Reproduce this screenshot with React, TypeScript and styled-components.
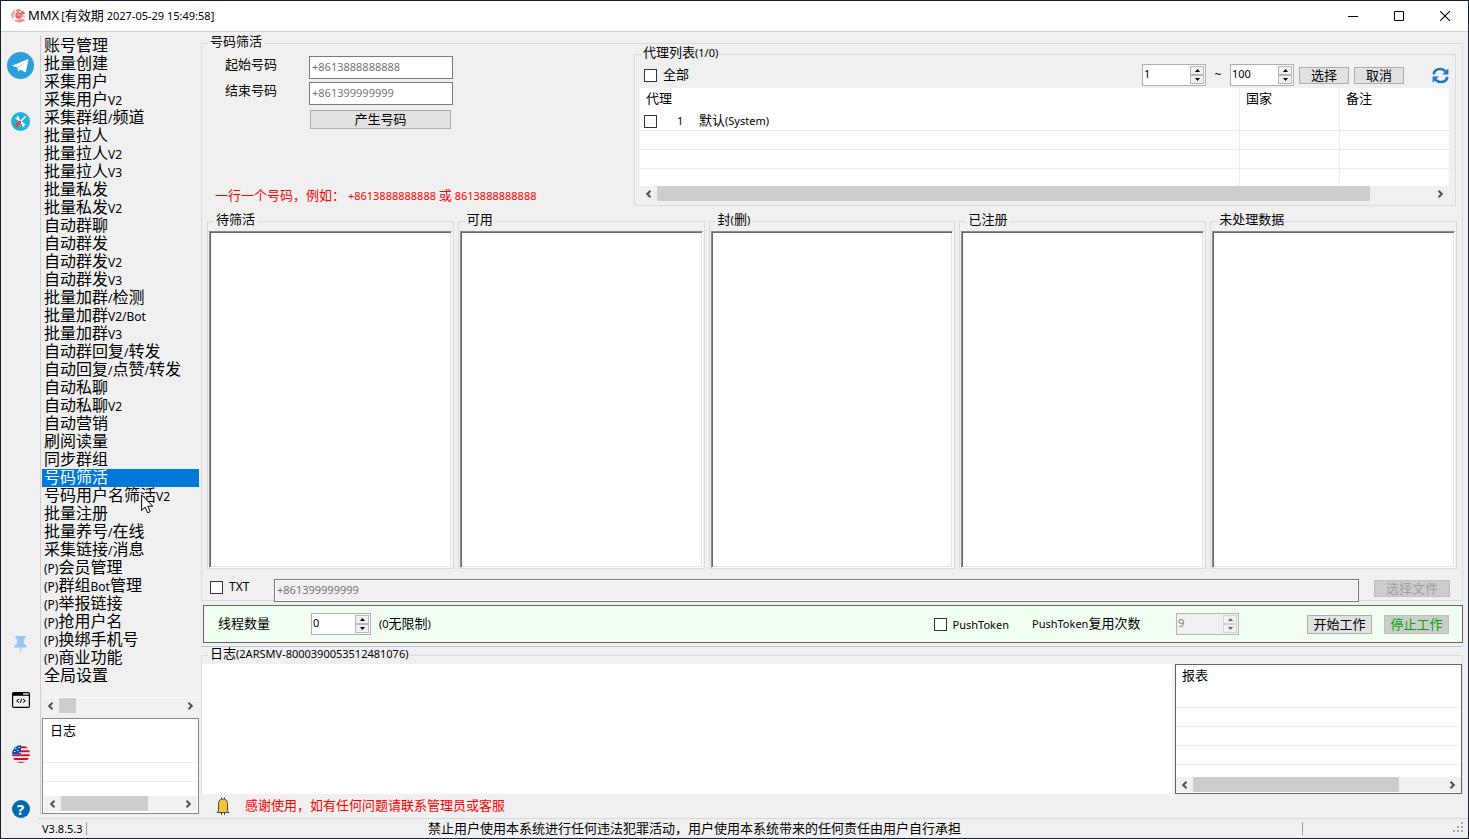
import React from "react";
import styled, { createGlobalStyle, css } from "styled-components";

const latinFont = `"Noto Sans", "Noto Sans CJK SC", sans-serif`;

const Global = createGlobalStyle`
  html, body { margin: 0; padding: 0; }
  *, *::before, *::after { box-sizing: border-box; }
  body {
    font-family: "Liberation Sans", "Noto Sans CJK SC", sans-serif;
    font-size: 13px;
    line-height: 18px;
    color: #000;
    background: #f0f0f0;
  }
  button, input, textarea { font: inherit; color: inherit; margin: 0; border-radius: 0; }
  button { padding: 0; }
`;

/* ---------- text ---------- */

const Latin = styled.span<{ $size: number }>`
  font-family: ${latinFont};
  font-size: ${(p) => p.$size}px;
  line-height: 1;
`;

/* Latin runs are set smaller than the Chinese characters around them. */
function Mixed({ text, size = 11 }: { text: string; size?: number }) {
  const parts = text.split(/([\x20-\x7e]+)/).filter(Boolean);
  return (
    <>
      {parts.map((part, i) =>
        /^[\x20-\x7e]+$/.test(part) ? (
          <Latin key={i} $size={size}>
            {part}
          </Latin>
        ) : (
          part
        )
      )}
    </>
  );
}

/* ---------- window ---------- */

const Window = styled.div`
  min-height: 100vh;
  display: flex;
  flex-direction: column;
  border: 1px solid #16202e;
  background: #f0f0f0;
  white-space: nowrap;
`;

const TitleBar = styled.header`
  height: 31px;
  display: flex;
  align-items: center;
  padding-left: 9px;
  background: #fff;
  border-bottom: 1px solid #d0d0d0;
`;

const Title = styled.h1`
  margin: 0 auto 0 2px;
  display: flex;
  align-items: baseline;
  gap: 2px;
  font-size: 13px;
  font-weight: 400;
  line-height: 18px;
`;

const WindowButton = styled.button`
  width: 46px;
  height: 30px;
  display: grid;
  place-items: center;
  border: 0;
  background: transparent;
`;

const Body = styled.div`
  flex: 1;
  display: flex;
`;

/* ---------- icon rail ---------- */

const Rail = styled.nav`
  width: 39px;
  display: flex;
  flex-direction: column;
  justify-content: space-between;
  align-items: center;
  padding-top: 20px;
`;

const RailGroup = styled.div<{ $gap: number }>`
  display: flex;
  flex-direction: column;
  align-items: center;
  gap: ${(p) => p.$gap}px;
`;

const RailButton = styled.button`
  display: grid;
  place-items: center;
  border: 0;
  background: transparent;
`;

const HelpMark = styled.span`
  width: 18px;
  height: 18px;
  border-radius: 50%;
  background: #0268b3;
  color: #fff;
  font-family: ${latinFont};
  font-size: 15px;
  font-weight: 700;
  line-height: 18px;
  text-align: center;
`;

/* ---------- sidebar ---------- */

const Sidebar = styled.aside`
  width: 160px;
  margin: 3px 0;
  padding: 2px 1px 1px 1px;
  border-left: 1px solid #cfcfcf;
  display: flex;
  flex-direction: column;
`;

const Menu = styled.ul`
  list-style: none;
  margin: 0;
  padding: 0;
  flex: 1;
`;

const MenuItem = styled.li`
  position: relative;
  height: 18px;
`;

const MenuButton = styled.button<{ $active: boolean }>`
  display: block;
  width: 100%;
  height: 18px;
  padding: 0 2px;
  border: 0;
  text-align: left;
  font-size: 16px;
  line-height: 18px;
  background: ${(p) => (p.$active ? "#0078d7" : "transparent")};
  color: ${(p) => (p.$active ? "#fff" : "#000")};
`;

const Pointer = styled.svg`
  position: absolute;
  left: 99px;
  top: 7px;
  z-index: 2;
`;

const SidebarScroll = styled.div`
  border-top: 1px solid #fff;
  margin-bottom: 5px;
`;

const ListBox = styled.section<{ $edge: string }>`
  display: flex;
  flex-direction: column;
  border: 1px solid ${(p) => p.$edge};
  background: #fff;
`;

const LogBox = styled(ListBox)`
  height: 96px;
  padding: 1px 1px 2px;
`;

const ListHead = styled.h2<{ $indent: number }>`
  height: 24px;
  margin: 0;
  padding-left: ${(p) => p.$indent}px;
  font-size: 13px;
  font-weight: 400;
  line-height: 22px;
`;

const ListLines = styled.div`
  flex: 1;
  overflow: hidden;
`;

const ListLine = styled.div`
  height: 19px;
  border-bottom: 1px solid #ececec;
`;

/* ---------- scroll bar ---------- */

const ScrollTrack = styled.div`
  height: 15px;
  display: flex;
  background: #f0f0f0;
`;

const ScrollArrow = styled.button`
  width: 17px;
  height: 15px;
  display: grid;
  place-items: center;
  border: 0;
  background: transparent;
`;

const ScrollLane = styled.div`
  flex: 1;
`;

const ScrollThumb = styled.div<{ $share: number }>`
  width: ${(p) => p.$share}%;
  height: 15px;
  background: #cdcdcd;
`;

function ScrollBar({ share }: { share: number }) {
  return (
    <ScrollTrack>
      <ScrollArrow type="button" aria-label="向左滚动">
        <svg width="7" height="8" viewBox="0 0 7 8">
          <path d="M5.5 0.8 2.2 4 5.5 7.2" fill="none" stroke="#505050" strokeWidth="2" />
        </svg>
      </ScrollArrow>
      <ScrollLane>
        <ScrollThumb $share={share} />
      </ScrollLane>
      <ScrollArrow type="button" aria-label="向右滚动">
        <svg width="7" height="8" viewBox="0 0 7 8">
          <path d="M1.5 0.8 4.8 4 1.5 7.2" fill="none" stroke="#505050" strokeWidth="2" />
        </svg>
      </ScrollArrow>
    </ScrollTrack>
  );
}

/* ---------- group boxes ---------- */

const Group = styled.fieldset`
  position: relative;
  min-width: 0;
  margin: 0;
  padding: 0;
  border: 1px solid #dcdcdc;
`;

const Legend = styled.legend`
  position: absolute;
  top: -9px;
  left: 6px;
  padding: 0 2px;
  background: #f0f0f0;
  line-height: 14px;
`;

/* ---------- controls ---------- */

const Button = styled.button<{ $width: number; $tall?: boolean; $tone?: "off" | "stop" }>`
  width: ${(p) => p.$width}px;
  height: ${(p) => (p.$tall ? 19 : 17)}px;
  display: flex;
  align-items: center;
  justify-content: center;
  border: 1px solid #adadad;
  background: #e1e1e1;
  line-height: 15px;
  ${(p) =>
    p.$tone &&
    css`
      border-color: #bfbfbf;
      background: #cccccc;
      color: ${p.$tone === "stop" ? "#00a800" : "#a0a0a0"};
    `}
`;

const TextInput = styled.input<{ $grow?: boolean }>`
  ${(p) => (p.$grow ? "flex: 1; min-width: 0;" : "width: 144px;")}
  height: 23px;
  padding: 0 2px 2px;
  border: 1px solid #7a7a7a;
  outline: none;
  background: #fff;
  font-family: ${latinFont};
  font-size: 11px;
  &::placeholder { color: #757575; opacity: 1; }
  &:disabled { background: #f0f0f0; box-shadow: inset 0 0 0 1px #fff; }
`;

const Check = styled.input.attrs({ type: "checkbox" })`
  appearance: none;
  flex: none;
  display: block;
  width: 13px;
  height: 13px;
  border: 1px solid #333;
  background: #fff;
`;

const CheckLabel = styled.label`
  display: flex;
  align-items: center;
  gap: 6px;
`;

const SpinFrame = styled.div<{ $width: number; $off?: boolean }>`
  width: ${(p) => p.$width}px;
  height: 22px;
  display: flex;
  border: 1px solid ${(p) => (p.$off ? "#b4b4b4" : "#abadb3")};
  background: ${(p) => (p.$off ? "#f0f0f0" : "#fff")};
`;

const SpinInput = styled.input`
  flex: 1;
  min-width: 0;
  height: 18px;
  padding: 0 1px;
  border: 0;
  outline: none;
  background: transparent;
  font-family: ${latinFont};
  font-size: 11px;
  appearance: textfield;
  &::-webkit-inner-spin-button { display: none; }
  &:disabled { color: #808080; }
`;

const SpinButtons = styled.div`
  display: flex;
  flex-direction: column;
  padding: 1px;
`;

const SpinButton = styled.button`
  width: 14px;
  height: 9px;
  display: grid;
  place-items: center;
  border: 1px solid #b8b8b8;
  background: #f0f0f0;
  color: #000;
  &:disabled { border-color: #d4d4d4; color: #606060; }
`;

function Spin({ label, value, width, off }: { label: string; value: number; width: number; off?: boolean }) {
  return (
    <SpinFrame $width={width} $off={off}>
      <SpinInput type="number" aria-label={label} defaultValue={value} disabled={off} />
      <SpinButtons>
        <SpinButton type="button" aria-label={`${label} +`} disabled={off}>
          <svg width="5" height="3" viewBox="0 0 5 3">
            <path d="M0 3 2.5 0 5 3Z" fill="currentColor" />
          </svg>
        </SpinButton>
        <SpinButton type="button" aria-label={`${label} -`} disabled={off}>
          <svg width="5" height="3" viewBox="0 0 5 3">
            <path d="M0 0 2.5 3 5 0Z" fill="currentColor" />
          </svg>
        </SpinButton>
      </SpinButtons>
    </SpinFrame>
  );
}

/* ---------- number filter page ---------- */

const Main = styled.main`
  flex: 1;
  min-width: 0;
  display: flex;
  flex-direction: column;
  padding: 11px 5px 0 1px;
`;

const FilterGroup = styled(Group)`
  flex: 1;
  display: flex;
  flex-direction: column;
`;

const TopRow = styled.div`
  display: flex;
  height: 162px;
  padding-right: 6px;
`;

const RangeForm = styled.form`
  width: 432px;
  display: flex;
  flex-direction: column;
  padding: 12px 0 1px 13px;
`;

const Field = styled.div`
  display: flex;
  align-items: flex-start;
  margin-bottom: 3px;
`;

const FieldLabel = styled.label`
  width: 94px;
  padding-left: 10px;
`;

const GenerateRow = styled.div`
  padding: 2px 0 0 95px;
`;

const Hint = styled.p`
  margin: auto 0 0;
  color: #f00;
`;

const ProxyGroup = styled(Group)`
  flex: 1;
  margin-top: 10px;
  padding: 7px 6px 4px 5px;
  display: flex;
  flex-direction: column;
`;

const ProxyTools = styled.div`
  height: 26px;
  display: flex;
  align-items: center;
  padding-left: 4px;
`;

const ProxyRange = styled.div`
  margin-left: auto;
  display: flex;
  align-items: center;
  gap: 5px;
`;

const Tilde = styled.span`
  width: 14px;
  font-family: ${latinFont};
  font-size: 12px;
  text-align: center;
`;

const RefreshButton = styled.button`
  margin-left: 28px;
  width: 17px;
  height: 20px;
  display: grid;
  place-items: center;
  border: 0;
  background: transparent;
`;

const ProxyTable = styled.table`
  width: 100%;
  table-layout: fixed;
  border-spacing: 0;
  background: #fff;
  th {
    height: 24px;
    padding: 0 6px 2px;
    font-weight: 400;
    text-align: left;
  }
  td {
    height: 19px;
    padding: 0 0 0 4px;
    border-bottom: 1px solid #ececec;
  }
  th + th, td + td { border-left: 1px solid #ececec; }
  tr:last-child td { height: 17px; border-bottom: 0; }
  tr { line-height: 16px; }
`;

const ProxyCell = styled.div`
  display: flex;
  align-items: center;
`;

const ProxyIndex = styled.span`
  width: 42px;
  padding-left: 20px;
`;

const Results = styled.div`
  flex: 1;
  display: grid;
  grid-template-columns: repeat(5, minmax(0, 1fr));
  gap: 4px;
  padding: 15px 5px 0;
`;

const ResultGroup = styled(Group)`
  display: flex;
  padding: 9px 1px 0 1px;
`;

const ResultText = styled.textarea`
  flex: 1;
  min-width: 0;
  resize: none;
  outline: none;
  padding: 2px;
  background: #fff;
  border: 1px solid;
  border-color: #8a8a8a #fff #fff #8a8a8a;
  box-shadow: inset 1px 1px 0 #696969, inset -1px -1px 0 #e3e3e3;
`;

const FileRow = styled.div`
  position: relative;
  z-index: 1;
  height: 31px;
  display: flex;
  align-items: flex-start;
  padding: 10px 12px 0 8px;
`;

const TxtLabel = styled(CheckLabel)`
  width: 64px;
  height: 16px;
`;

const FileButtonSlot = styled.div`
  padding: 1px 0 0 15px;
`;

const WorkBar = styled.section`
  height: 38px;
  margin: 4px 0 3px 2px;
  padding: 0 13px 0 14px;
  display: flex;
  align-items: center;
  border: 1px solid #646464;
  background: #f0fff0;
`;

const ThreadLabel = styled.span`
  width: 93px;
`;

const AfterSpin = styled.span`
  margin: 0 auto 0 8px;
`;

const ReuseLabel = styled.span`
  width: 144px;
  margin-left: 23px;
`;

const WorkButtons = styled.div`
  display: flex;
  gap: 12px;
  margin-left: 68px;
`;

const Divider = styled.div`
  height: 1px;
  background: #b4c8dc;
`;

const LogGroup = styled(Group)`
  margin-top: 8px;
  padding-top: 8px;
  border-bottom: 0;
`;

const LogRow = styled.div`
  height: 130px;
  display: flex;
  gap: 3px;
`;

const LogText = styled.textarea`
  flex: 1;
  border: 0;
  padding: 4px;
  resize: none;
  outline: none;
  background: #fff;
`;

const ReportBox = styled(ListBox)`
  width: 287px;
  padding-bottom: 1px;
`;

const Notice = styled.p`
  height: 24px;
  margin: 0;
  padding-left: 15px;
  display: flex;
  align-items: center;
  gap: 15px;
  color: #f00;
`;

/* ---------- status bar ---------- */

const StatusBar = styled.footer`
  height: 20px;
  margin-left: 37px;
  display: flex;
  align-items: center;
  border-top: 1px solid #d7d7d7;
`;

const StatusCell = styled.span<{ $kind: "version" | "notice" | "grip" }>`
  height: 13px;
  line-height: 13px;
  ${(p) => p.$kind === "version" && "width: 49px; padding-left: 4px; border-right: 1px solid #a0a0a0;"}
  ${(p) => p.$kind === "notice" && "flex: 1; text-align: center; border-right: 1px solid #a0a0a0;"}
  ${(p) => p.$kind === "grip" && "width: 165px; padding-right: 4px; text-align: right;"}
`;

/* ---------- icons ---------- */

const LogoIcon = () => (
  <svg width="16" height="16" viewBox="0 0 16 16">
    <path d="M1 8C1 4 3.500 2 6 1.600 4.800 3 4.600 4.400 5.200 5.600 3.800 7 3.400 8.800 4.400 10.600 2.600 10.600 1.400 9.600 1 8Z" fill="#f0a8a2" />
    <path d="M6.500 1.400C9 .6 11.200 1.600 11.400 3.400 9.600 2.800 7.800 3.400 7.400 4.800 6.400 4 6 2.600 6.500 1.400Z" fill="#e9827b" />
    <circle cx="8.600" cy="7.600" r="3.300" fill="#e4675f" />
    <path d="M7 7.500C8 6 10 6.400 10.200 8" fill="none" stroke="#fff" strokeWidth=".7" />
    <path d="M11 3.200C13 2.400 15 3.600 15 5.600 13.800 7 12 7 11 5.800Z" fill="#e6736b" />
    <path d="M3 11C5 13 8 12 10 11.200 12 10.400 14 11 15 12.600 12 15 6 15.600 3 11Z" fill="#ec9089" />
    <path d="M12 7.500C13.600 7 15.200 8 15 9.800 13.600 10 12.400 9.400 12 7.500Z" fill="#f2b0aa" />
  </svg>
);

const TelegramIcon = () => (
  <svg width="27" height="27" viewBox="0 0 27 27">
    <circle cx="13.500" cy="13.500" r="13.500" fill="#2aa1de" />
    <path d="M5.500 13.400 20.300 7.400C21 7.200 21.500 7.600 21.300 8.500L18.900 19.500C18.700 20.300 18.200 20.500 17.500 20.100L13.800 17.400 12 19.100C11.600 19.500 11.300 19.500 11.200 18.800L10.100 15.300 5.600 14.100C5 13.900 5 13.600 5.500 13.400Z" fill="#fff" />
    <path d="M10.200 15.300 18 9.900 12 16.200 11.600 18.900Z" fill="#b5d9ee" />
  </svg>
);

const ToolsIcon = () => (
  <svg width="19" height="19" viewBox="0 0 19 19">
    <circle cx="9.500" cy="9.500" r="9.500" fill="#21b4d2" />
    <path d="M6.200 6.200 13 13" stroke="#fff" strokeWidth="1.900" />
    <path d="M3.900 5.300C4.400 7.400 6.400 8 7.900 6.900 8.700 5.200 7.500 3.500 5.400 3.700L6.400 5.300 5.300 6.300Z" fill="#fff" />
    <path d="M15.200 13.600C14.700 11.600 12.700 11 11.300 12.100 10.600 13.800 11.700 15.400 13.700 15.300L12.800 13.700 13.800 12.700Z" fill="#fff" />
    <path d="M14.800 4.200 9.500 9.500" stroke="#fff" strokeWidth="1.500" />
    <path d="M8.900 10.100 5.300 13.700" stroke="#e2403c" strokeWidth="2.800" strokeLinecap="round" />
  </svg>
);

const PinIcon = () => (
  <svg width="19" height="19" viewBox="0 0 19 19">
    <path d="M4.500 0H14.500V2L12.800 3V7.400L15.300 9.800V11.400H3.700V9.800L6.200 7.400V3L4.500 2Z" fill="#98c0fb" />
    <path d="M8.600 11.400H10.400L9.500 18Z" fill="#a9caf9" />
  </svg>
);

const CodeIcon = () => (
  <svg width="18" height="16" viewBox="0 0 18 16">
    <rect x=".6" y=".6" width="16.800" height="14.800" rx="1.200" fill="none" stroke="#000" strokeWidth="1.200" />
    <path d="M1 1H11V3H1Z" fill="#000" />
    <path d="M1 3.200H17" stroke="#000" strokeWidth="1.200" />
    <path d="M7 7 4.600 8.800 7 10.600M11 7 13.400 8.800 11 10.600M9.700 6.600 8.300 11" fill="none" stroke="#000" strokeWidth="1" />
  </svg>
);

const FlagIcon = () => (
  <svg width="18" height="18" viewBox="0 0 18 18">
    <clipPath id="flag-disc">
      <circle cx="9" cy="9" r="9" />
    </clipPath>
    <g clipPath="url(#flag-disc)">
      <rect width="18" height="18" fill="#f4f4f4" />
      <path d="M9 1.200H18V3.300H9ZM9 5.200H18V7.300H9ZM0 9.200H18V11.300H0ZM0 13H18V15H0ZM0 16.800H18V18H0Z" fill="#d80a30" />
      <rect width="9" height="9" fill="#0b52b0" />
      <path d="M3 3.500H4.500M6.500 2.500H8M2 6.500H3.500M5 5.500H6.500M7 7.500H8.500" stroke="#f0f4fa" strokeWidth="1" />
    </g>
  </svg>
);

const RefreshIcon = () => (
  <svg width="17" height="17" viewBox="0 0 17 17">
    <path d="M1.600 7.300C2.200 3.900 5 2 8.300 2 10.400 2 12.200 2.800 13.600 4.300" fill="none" stroke="#1d78c1" strokeWidth="2.600" />
    <path d="M16.400 1.200V7.400H10.200Z" fill="#1d78c1" />
    <path d="M15.400 9.700C14.800 13.100 12 15 8.700 15 6.600 15 4.800 14.200 3.400 12.700" fill="none" stroke="#1d78c1" strokeWidth="2.600" />
    <path d="M.6 15.800V9.600H6.800Z" fill="#1d78c1" />
  </svg>
);

const BellIcon = () => (
  <svg width="14" height="18" viewBox="0 0 14 18">
    <path d="M5.500 2V.5M8.500 2V.5M5.500 16V17.800M8.500 16V17.800" stroke="#1b3f66" strokeWidth="1" />
    <path d="M2.500 13.500V6.500C2.500 3.500 4.300 2 7 2S11.500 3.500 11.500 6.500V13.500L12.800 15.500H1.200Z" fill="#ffc233" stroke="#1b3f66" strokeWidth=".9" />
  </svg>
);

const GripIcon = () => (
  <svg width="11" height="11" viewBox="0 0 11 11">
    <path d="M8 0H10V2H8ZM4 4H6V6H4ZM8 4H10V6H8ZM0 8H2V10H0ZM4 8H6V10H4ZM8 8H10V10H8Z" fill="#a8a8a8" />
  </svg>
);

/* ---------- data ---------- */

const MENU = [
  "账号管理", "批量创建", "采集用户", "采集用户V2", "采集群组/频道", "批量拉人",
  "批量拉人V2", "批量拉人V3", "批量私发", "批量私发V2", "自动群聊", "自动群发",
  "自动群发V2", "自动群发V3", "批量加群/检测", "批量加群V2/Bot", "批量加群V3",
  "自动群回复/转发", "自动回复/点赞/转发", "自动私聊", "自动私聊V2", "自动营销",
  "刷阅读量", "同步群组", "号码筛活", "号码用户名筛活V2", "批量注册", "批量养号/在线",
  "采集链接/消息", "(P)会员管理", "(P)群组Bot管理", "(P)举报链接", "(P)抢用户名",
  "(P)换绑手机号", "(P)商业功能", "全局设置",
];
const ACTIVE = "号码筛活";
const HOVERED = "号码用户名筛活V2";
const RESULTS = ["待筛活", "可用", "封(删)", "已注册", "未处理数据"];

export default function App() {
  return (
    <Window>
      <Global />
      <TitleBar>
        <LogoIcon />
        <Title>
          <Latin $size={13}>MMX</Latin>
          <span>
            <Mixed text="[有效期 2027-05-29 15:49:58]" />
          </span>
        </Title>
        <WindowButton type="button" aria-label="最小化">
          <svg width="10" height="10" viewBox="0 0 10 10">
            <path d="M0 5.500H10" stroke="#000" />
          </svg>
        </WindowButton>
        <WindowButton type="button" aria-label="最大化">
          <svg width="10" height="10" viewBox="0 0 10 10">
            <path d="M.5 .5H9.500V9.500H.5Z" fill="none" stroke="#000" />
          </svg>
        </WindowButton>
        <WindowButton type="button" aria-label="关闭">
          <svg width="10" height="10" viewBox="0 0 10 10">
            <path d="M0 0 10 10M10 0 0 10" stroke="#000" strokeWidth="1.100" />
          </svg>
        </WindowButton>
      </TitleBar>

      <Body>
        <Rail>
          <RailGroup $gap={33}>
            <RailButton type="button" aria-label="Telegram"><TelegramIcon /></RailButton>
            <RailButton type="button" aria-label="工具"><ToolsIcon /></RailButton>
          </RailGroup>
          <RailGroup $gap={37}>
            <RailButton type="button" aria-label="置顶"><PinIcon /></RailButton>
            <RailButton type="button" aria-label="代码"><CodeIcon /></RailButton>
            <RailButton type="button" aria-label="语言"><FlagIcon /></RailButton>
            <RailButton type="button" aria-label="帮助"><HelpMark>?</HelpMark></RailButton>
          </RailGroup>
        </Rail>

        <Sidebar>
          <Menu>
            {MENU.map((item) => (
              <MenuItem key={item}>
                <MenuButton type="button" $active={item === ACTIVE}>
                  <Mixed text={item} size={12} />
                </MenuButton>
                {item === HOVERED && (
                  <Pointer width="13" height="20" viewBox="0 0 13 20" aria-hidden="true">
                    <path d="M.6 1V16.500L4.200 13.200 6.600 18.800 9.200 17.700 6.800 12.200H11.800Z" fill="#fff" stroke="#000" />
                  </Pointer>
                )}
              </MenuItem>
            ))}
          </Menu>
          <SidebarScroll>
            <ScrollBar share={14} />
          </SidebarScroll>
          <LogBox $edge="#82868f">
            <ListHead $indent={6}>日志</ListHead>
            <ListLines>
              <ListLine />
              <ListLine />
            </ListLines>
            <ScrollBar share={73} />
          </LogBox>
        </Sidebar>

        <Main>
          <FilterGroup>
            <Legend>号码筛活</Legend>
            <TopRow>
              <RangeForm>
                <Field>
                  <FieldLabel htmlFor="start-number">起始号码</FieldLabel>
                  <TextInput id="start-number" placeholder="+8613888888888" />
                </Field>
                <Field>
                  <FieldLabel htmlFor="end-number">结束号码</FieldLabel>
                  <TextInput id="end-number" placeholder="+861399999999" />
                </Field>
                <GenerateRow>
                  <Button type="button" $width={141} $tall>产生号码</Button>
                </GenerateRow>
                <Hint>
                  <Mixed text="一行一个号码，例如： +8613888888888 或 8613888888888" />
                </Hint>
              </RangeForm>

              <ProxyGroup>
                <Legend><Mixed text="代理列表(1/0)" /></Legend>
                <ProxyTools>
                  <CheckLabel>
                    <Check />
                    全部
                  </CheckLabel>
                  <ProxyRange>
                    <Spin label="起始" value={1} width={64} />
                    <Tilde>~</Tilde>
                    <Spin label="结束" value={100} width={64} />
                    <Button type="button" $width={50}>选择</Button>
                    <Button type="button" $width={50}>取消</Button>
                  </ProxyRange>
                  <RefreshButton type="button" aria-label="刷新"><RefreshIcon /></RefreshButton>
                </ProxyTools>
                <ProxyTable>
                  <colgroup>
                    <col />
                    <col width="100" />
                    <col width="110" />
                  </colgroup>
                  <thead>
                    <tr>
                      <th>代理</th>
                      <th>国家</th>
                      <th>备注</th>
                    </tr>
                  </thead>
                  <tbody>
                    <tr>
                      <td>
                        <ProxyCell>
                          <Check aria-label="默认(System)" />
                          <ProxyIndex><Mixed text="1" /></ProxyIndex>
                          <span><Mixed text="默认(System)" /></span>
                        </ProxyCell>
                      </td>
                      <td />
                      <td />
                    </tr>
                    <tr><td /><td /><td /></tr>
                    <tr><td /><td /><td /></tr>
                    <tr><td /><td /><td /></tr>
                  </tbody>
                </ProxyTable>
                <ScrollBar share={92} />
              </ProxyGroup>
            </TopRow>

            <Results>
              {RESULTS.map((name) => (
                <ResultGroup key={name}>
                  <Legend><Mixed text={name} /></Legend>
                  <ResultText aria-label={name} />
                </ResultGroup>
              ))}
            </Results>

            <FileRow>
              <TxtLabel>
                <Check />
                <Mixed text="TXT" size={12} />
              </TxtLabel>
              <TextInput $grow disabled placeholder="+861399999999" aria-label="TXT" />
              <FileButtonSlot>
                <Button type="button" $width={76} $tone="off" disabled>选择文件</Button>
              </FileButtonSlot>
            </FileRow>
          </FilterGroup>

          <WorkBar>
            <ThreadLabel>线程数量</ThreadLabel>
            <Spin label="线程数量" value={0} width={60} />
            <AfterSpin><Mixed text="(0无限制)" /></AfterSpin>
            <CheckLabel>
              <Check />
              <Mixed text="PushToken" />
            </CheckLabel>
            <ReuseLabel><Mixed text="PushToken复用次数" /></ReuseLabel>
            <Spin label="PushToken复用次数" value={9} width={63} off />
            <WorkButtons>
              <Button type="button" $width={65} $tall>开始工作</Button>
              <Button type="button" $width={65} $tall $tone="stop" disabled>停止工作</Button>
            </WorkButtons>
          </WorkBar>

          <Divider />

          <LogGroup>
            <Legend><Mixed text="日志(2ARSMV-8000390053512481076)" /></Legend>
            <LogRow>
              <LogText aria-label="日志" readOnly />
              <ReportBox $edge="#646464">
                <ListHead $indent={6}>报表</ListHead>
                <ListLines>
                  <ListLine />
                  <ListLine />
                  <ListLine />
                  <ListLine />
                </ListLines>
                <ScrollBar share={82} />
              </ReportBox>
            </LogRow>
          </LogGroup>

          <Notice>
            <BellIcon />
            感谢使用，如有任何问题请联系管理员或客服
          </Notice>
        </Main>
      </Body>

      <StatusBar>
        <StatusCell $kind="version"><Mixed text="V3.8.5.3" /></StatusCell>
        <StatusCell $kind="notice">禁止用户使用本系统进行任何违法犯罪活动，用户使用本系统带来的任何责任由用户自行承担</StatusCell>
        <StatusCell $kind="grip"><GripIcon /></StatusCell>
      </StatusBar>
    </Window>
  );
}
